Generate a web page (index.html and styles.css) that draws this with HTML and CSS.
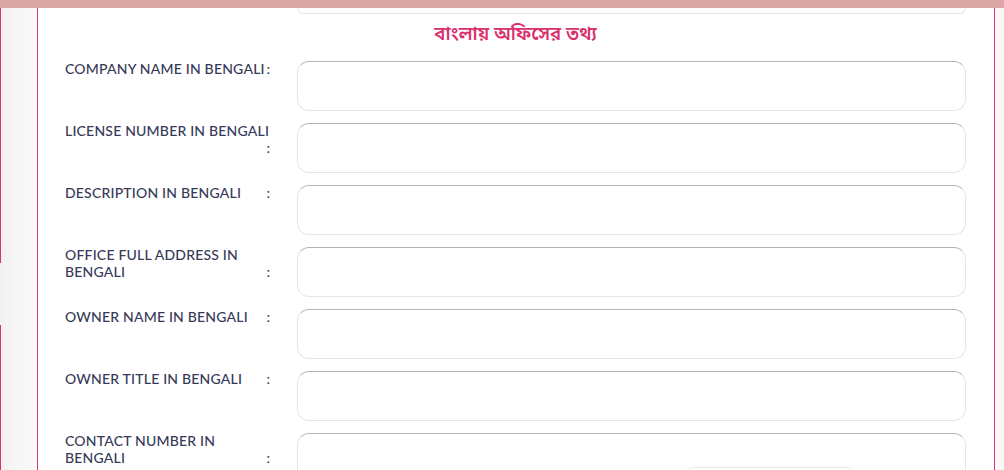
FILE: index.html
```html
<!DOCTYPE html>
<html lang="en">
<head>
<meta charset="utf-8">
<title>Bengali Office Info</title>
<link rel="stylesheet" href="styles.css">
</head>
<body>
<div class="topbar"></div>
<div class="layout">
  <aside class="side">
    <div class="side-seg side-seg-top"></div>
    <div class="side-gap"></div>
    <div class="side-seg side-seg-bottom"></div>
  </aside>
  <main class="panel">
    <div class="stub-row"><div class="stub"></div></div>
    <h2 class="section-title">বাংলায় অফিসের তথ্য</h2>
    <div class="form">
      <div class="row">
        <label class="label">Company Name in Bengali<span class="colon">:</span></label>
        <div class="field"><input class="input" type="text"></div>
      </div>
      <div class="row">
        <label class="label">License Number in Bengali<span class="colon">:</span></label>
        <div class="field"><input class="input" type="text"></div>
      </div>
      <div class="row">
        <label class="label">Description in Bengali<span class="colon">:</span></label>
        <div class="field"><input class="input" type="text"></div>
      </div>
      <div class="row">
        <label class="label">Office Full Address in Bengali<span class="colon">:</span></label>
        <div class="field"><input class="input" type="text"></div>
      </div>
      <div class="row">
        <label class="label">Owner Name in Bengali<span class="colon">:</span></label>
        <div class="field"><input class="input" type="text"></div>
      </div>
      <div class="row">
        <label class="label">Owner Title in Bengali<span class="colon">:</span></label>
        <div class="field"><input class="input" type="text"></div>
      </div>
      <div class="row">
        <label class="label">Contact Number in Bengali<span class="colon">:</span></label>
        <div class="field field-pop"><input class="input" type="text"><div class="pop"></div></div>
      </div>
    </div>
  </main>
  <div class="rail"></div>
</div>
</body>
</html>
```
FILE: styles.css
```css
* { box-sizing: border-box; }
html, body { margin: 0; padding: 0; }
body {
  width: 1004px;
  height: 470px;
  overflow: hidden;
  background: #f8f8f8;
  font-family: "Lato", "Noto Sans", sans-serif;
}
.topbar {
  height: 8px;
  background: #dba8a6;
}
.layout {
  display: flex;
  height: 462px;
}
.side {
  width: 37px;
  flex: none;
  display: flex;
  flex-direction: column;
  background: linear-gradient(to right, #f1f1f1, #f6f6f6 40%, #fafafa);
}
.side-seg { border-left: 1px solid #e0306e; }
.side-seg-top { height: 255px; }
.side-gap { height: 62px; }
.side-seg-bottom { flex: 1; }
.panel {
  width: 958px;
  flex: none;
  background: #ffffff;
  border-left: 1px solid #d63a6e;
  border-right: 1px solid #e0306e;
  padding: 0 28px 0 27px;
  overflow: hidden;
}
.rail {
  flex: 1;
  background: #f8f8f8;
}
.stub-row {
  padding-left: 232px;
}
.stub {
  height: 6px;
  border: 1px solid #e6e6e6;
  border-top: none;
  border-radius: 0 0 12px 12px;
}
.section-title {
  margin: 0;
  height: 47px;
  padding-bottom: 4px;
  display: flex;
  align-items: center;
  justify-content: center;
  color: #d9306e;
  font-family: "Noto Sans Bengali", "Lohit Bengali", "Noto Sans", sans-serif;
  font-size: 18.5px;
  font-weight: 600;
}
.form {
  display: flex;
  flex-direction: column;
  gap: 12px;
}
.row {
  display: grid;
  grid-template-columns: 205px 1fr;
  column-gap: 27px;
  align-items: start;
}
.label {
  display: block;
  text-transform: uppercase;
  font-size: 14px;
  line-height: 17px;
  font-weight: 500;
  letter-spacing: 0.2px;
  color: #363a58;
  margin-top: -1px;
}
.colon {
  float: right;
  letter-spacing: 0;
}
.field { position: relative; }
.input {
  display: block;
  width: 100%;
  height: 50px;
  border: 1px solid #e6e6e6;
  border-top-color: #b3b3b3;
  border-radius: 12px;
  background: #ffffff;
  outline: none;
  padding: 0 14px;
  font: inherit;
}
.pop {
  position: absolute;
  left: 391px;
  top: 34px;
  width: 164px;
  height: 20px;
  border-top: 1px solid #ececec;
  border-radius: 6px 6px 0 0;
  box-shadow: 0 -1px 2px rgba(0,0,0,0.03);
  background: #ffffff;
}
```
